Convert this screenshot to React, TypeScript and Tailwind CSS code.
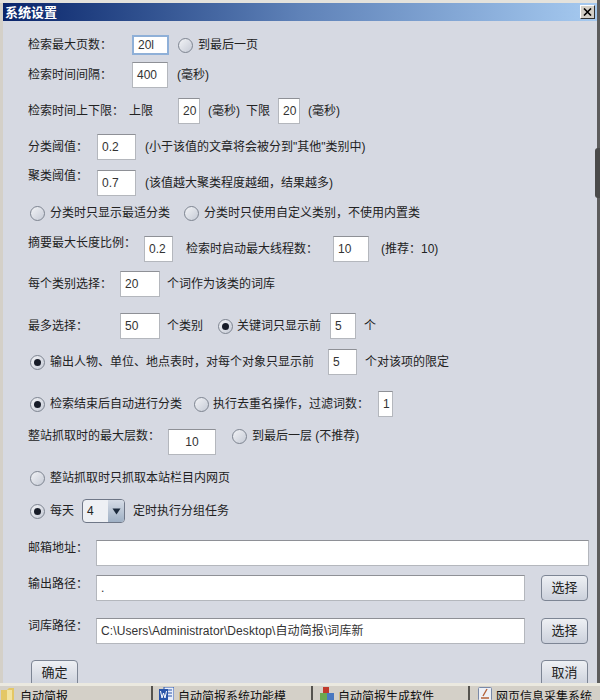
import React from 'react';

const cjk = "font-['Liberation_Sans','Noto_Sans_CJK_SC',sans-serif]";
// full-width punctuation
const colon = '\uFF1A';
const comma = '\uFF0C';

const Radio = ({ on = false, className = '' }: { on?: boolean; className?: string }) => (
    <span className={`flex h-[15px] w-[15px] shrink-0 items-center justify-center rounded-full border border-[#7d8490] bg-gradient-to-br from-[#f2f3f6] to-[#c6cbd6] ${className}`}>
        {on && <span className="h-[7px] w-[7px] rounded-full bg-[#171c28]" />}
    </span>
);

const Field = ({ value = '', className = '' }: { value?: string; className?: string }) => (
    <div className={`flex h-[26px] shrink-0 items-center overflow-hidden border border-[#b4b7bd] border-t-[#8e9096] bg-white px-[4px] text-[12px] text-[#333] ${className}`}>
        {value}
    </div>
);

const Row = ({ className = '', children }: { className?: string; children: React.ReactNode }) => (
    <div className={`flex shrink-0 items-center whitespace-nowrap ${className}`}>{children}</div>
);

const Btn = ({ label, className = '' }: { label: string; className?: string }) => (
    <div className={`flex h-[26px] w-[47px] shrink-0 items-center justify-center rounded-[4px] border border-[#7d8594] bg-gradient-to-b from-[#eef0f4] to-[#ccd1dc] text-[13px] ${className}`}>
        {label}
    </div>
);

const TaskItem = ({ label, icon, className = '' }: { label: string; icon: React.ReactNode; className?: string }) => (
    <div className={`flex h-full shrink-0 items-start overflow-hidden whitespace-nowrap ${className}`}>
        {icon}
        <span className="ml-[4px] mt-[4px] text-[12px] leading-[14px] text-[#111]">{label}</span>
    </div>
);

export default function App() {
    return (
        <div className={`flex h-[700px] w-[600px] flex-col overflow-hidden bg-[#d6d9e2] text-[12px] text-[#222] ${cjk} relative`}>
            {/* window frame */}
            <div className="h-[3px] shrink-0 bg-[#e4e2dc]" />
            <div className="ml-[3px] mr-[3px] flex h-[18px] shrink-0 items-center justify-between bg-gradient-to-r from-[#0a246a] via-[#5f82b8] to-[#a6caf0] pl-[2px] pr-[2px]">
                <span className="text-[13px] font-bold leading-none text-white">系统设置</span>
                <div className="flex h-[14px] w-[15px] items-center justify-center border border-[#333] border-l-white border-t-white bg-[#d4d0c8]">
                    <svg width="9" height="8" viewBox="0 0 9 8"><path d="M1 0.5 8 7.5M8 0.5 1 7.5" stroke="#000" strokeWidth="1.6" /></svg>
                </div>
            </div>

            <div className="flex flex-1 flex-col overflow-hidden pl-[28px]">
                <Row className="mt-[14px] h-[20px]">
                    <span className="w-[104px]">检索最大页数{colon}</span>
                    <Field value="20l" className="!h-[20px] w-[37px] border-2 !border-[#8fb0d8] px-[3px]" />
                    <Radio className="ml-[9px]" />
                    <span className="ml-[5px]">到最后一页</span>
                </Row>
                <Row className="mt-[7px] h-[26px]">
                    <span className="w-[104px]">检索时间间隔{colon}</span>
                    <Field value="400" className="w-[36px]" />
                    <span className="ml-[9px]">(毫秒)</span>
                </Row>
                <Row className="mt-[10px] h-[26px]">
                    <span className="w-[101px]">检索时间上下限{colon}</span>
                    <span className="w-[49px]">上限</span>
                    <Field value="20" className="w-[22px]" />
                    <span className="ml-[8px] w-[38px]">(毫秒)</span>
                    <span className="w-[32px]">下限</span>
                    <Field value="20" className="w-[22px]" />
                    <span className="ml-[8px]">(毫秒)</span>
                </Row>
                <Row className="mt-[10px] h-[26px]">
                    <span className="w-[69px]">分类阈值{colon}</span>
                    <Field value="0.2" className="w-[39px]" />
                    <span className="ml-[9px]">(小于该值的文章将会被分到"其他"类别中)</span>
                </Row>
                <Row className="mt-[10px] h-[26px]">
                    <span className="mb-[14px] w-[69px]">聚类阈值{colon}</span>
                    <Field value="0.7" className="w-[39px]" />
                    <span className="ml-[9px]">(该值越大聚类程度越细{comma}结果越多)</span>
                </Row>
                <Row className="mt-[4px] h-[26px]">
                    <Radio className="ml-[2px]" />
                    <span className="ml-[5px] w-[134px]">分类时只显示最适分类</span>
                    <Radio />
                    <span className="ml-[5px]">分类时只使用自定义类别{comma}不使用内置类</span>
                </Row>
                <Row className="mt-[10px] h-[26px]">
                    <span className="mb-[12px] w-[116px]">摘要最大长度比例{colon}</span>
                    <Field value="0.2" className="w-[29px]" />
                    <span className="ml-[13px] w-[147px]">检索时启动最大线程数{colon}</span>
                    <Field value="10" className="w-[36px]" />
                    <span className="ml-[12px]">(推荐{colon}10)</span>
                </Row>
                <Row className="mt-[9px] h-[26px]">
                    <span className="w-[92px]">每个类别选择{colon}</span>
                    <Field value="20" className="w-[40px]" />
                    <span className="ml-[7px]">个词作为该类的词库</span>
                </Row>
                <Row className="mt-[16px] h-[26px]">
                    <span className="w-[92px]">最多选择{colon}</span>
                    <Field value="50" className="w-[40px]" />
                    <span className="ml-[7px] w-[51px]">个类别</span>
                    <Radio on />
                    <span className="ml-[4px] w-[93px]">关键词只显示前</span>
                    <Field value="5" className="w-[26px]" />
                    <span className="ml-[8px]">个</span>
                </Row>
                <Row className="mt-[10px] h-[26px]">
                    <Radio on className="ml-[2px]" />
                    <span className="ml-[5px] w-[278px]">输出人物、单位、地点表时{comma}对每个对象只显示前</span>
                    <Field value="5" className="w-[29px]" />
                    <span className="ml-[8px]">个对该项的限定</span>
                </Row>
                <Row className="mt-[16px] h-[26px]">
                    <Radio on className="ml-[2px]" />
                    <span className="ml-[5px] w-[144px]">检索结束后自动进行分类</span>
                    <Radio />
                    <span className="ml-[4px] w-[165px]">执行去重名操作{comma}过滤词数{colon}</span>
                    <Field value="1" className="w-[15px] px-[3px]" />
                </Row>
                <Row className="mt-[12px] h-[26px]">
                    <span className="mb-[12px] w-[140px]">整站抓取时的最大层数{colon}</span>
                    <Field value="10" className="w-[48px] justify-center" />
                    <Radio className="mb-[12px] ml-[16px]" />
                    <span className="mb-[12px] ml-[5px]">到最后一层 (不推荐)</span>
                </Row>
                <Row className="mt-[10px] h-[26px]">
                    <Radio className="ml-[2px]" />
                    <span className="ml-[5px]">整站抓取时只抓取本站栏目内网页</span>
                </Row>
                <Row className="mt-[8px] h-[24px]">
                    <Radio on className="ml-[2px]" />
                    <span className="ml-[5px] w-[32px]">每天</span>
                    <div className="flex h-[24px] w-[43px] overflow-hidden rounded-[4px] border border-[#6f7787] bg-[#eef0f4]">
                        <span className="flex-1 pl-[4px] text-[12px] leading-[22px]">4</span>
                        <span className="flex w-[16px] items-center justify-center bg-gradient-to-b from-[#d6dce6] to-[#9fb0c4]">
                            <svg width="9" height="7" viewBox="0 0 9 7"><path d="M0.5 0.5H8.5L4.5 6.5Z" fill="#1c2a3c" /></svg>
                        </span>
                    </div>
                    <span className="ml-[8px]">定时执行分组任务</span>
                </Row>
                <Row className="mt-[17px] h-[25px]">
                    <span className="mb-[10px] w-[68px]">邮箱地址{colon}</span>
                    <Field className="h-[25px] w-[493px]" />
                </Row>
                <Row className="mt-[10px] h-[26px]">
                    <span className="mb-[8px] w-[68px]">输出路径{colon}</span>
                    <Field value="." className="w-[429px]" />
                    <Btn label="选择" className="ml-[16px]" />
                </Row>
                <Row className="mt-[17px] h-[25px]">
                    <span className="mb-[10px] w-[68px]">词库路径{colon}</span>
                    <Field value="C:\Users\Administrator\Desktop\自动简报\词库新" className="h-[24px] w-[429px] tracking-[0.1px]" />
                    <Btn label="选择" className="ml-[16px]" />
                </Row>
                <Row className="mt-[17px] h-[24px] items-start">
                    <Btn label="确定" className="ml-[3px] rounded-b-none" />
                    <Btn label="取消" className="ml-[463px] rounded-b-none" />
                </Row>
            </div>

            {/* taskbar */}
            <div className="flex h-[17px] shrink-0 border-t-[3px] border-[#ebe9e0] bg-[#d4d0c8]">
                <TaskItem
                    className="w-[153px] border-r-2 border-[#55534e]"
                    icon={
                        <svg className="ml-[1px] mt-[1px] shrink-0" width="15" height="14" viewBox="0 0 15 14">
                            <path d="M0 3H6L8 1H13V14H0Z" fill="#e4c765" />
                            <path d="M6 3H11V14H6Z" fill="#f3e3a0" />
                        </svg>
                    }
                    label="自动简报"
                />
                <TaskItem
                    className="w-[160px] border-r-2 border-[#55534e] pl-[6px]"
                    icon={
                        <svg className="mt-[1px] shrink-0" width="15" height="14" viewBox="0 0 15 14">
                            <rect x="5" y="0" width="10" height="14" fill="#e8eefa" stroke="#2a55a8" />
                            <path d="M9 3H13M9 6H13M9 9H13" stroke="#2a55a8" />
                            <rect x="0" y="2" width="9" height="12" fill="#2a55a8" />
                            <path d="M1.5 4 3 11 4.5 6 6 11 7.5 4" stroke="#fff" fill="none" />
                        </svg>
                    }
                    label="自动简报系统功能模"
                />
                <TaskItem
                    className="w-[157px] border-r-2 border-[#55534e] pl-[7px]"
                    icon={
                        <svg className="mt-[1px] shrink-0" width="14" height="14" viewBox="0 0 14 14">
                            <path d="M3 0H9V6H3Z" fill="#c0392b" />
                            <path d="M0 6H7V14H0Z" fill="#6aa84f" />
                            <path d="M7 6H14V14H7Z" fill="#4a78c0" />
                        </svg>
                    }
                    label="自动简报生成软件"
                />
                <TaskItem
                    className="flex-1 pl-[8px]"
                    icon={
                        <svg className="mt-[1px] shrink-0" width="14" height="14" viewBox="0 0 14 14">
                            <rect x="0.5" y="0.5" width="13" height="13" rx="1" fill="#eef0f6" stroke="#7a8aa8" />
                            <path d="M9 2 5 9M3 11H11" stroke="#b5623a" strokeWidth="1.4" />
                        </svg>
                    }
                    label="网页信息采集系统"
                />
            </div>

            {/* window edges and resize grip */}
            <div className="absolute bottom-[17px] left-0 top-[3px] w-[3px] bg-[#d4d0c8]" />
            <div className="absolute bottom-[17px] right-0 top-0 w-[3px] bg-[#5c5c5c]" />
            <div className="absolute right-0 top-[148px] h-[50px] w-[5px] rounded-l-[3px] bg-[#4a4a4a]" />
        </div>
    );
}
